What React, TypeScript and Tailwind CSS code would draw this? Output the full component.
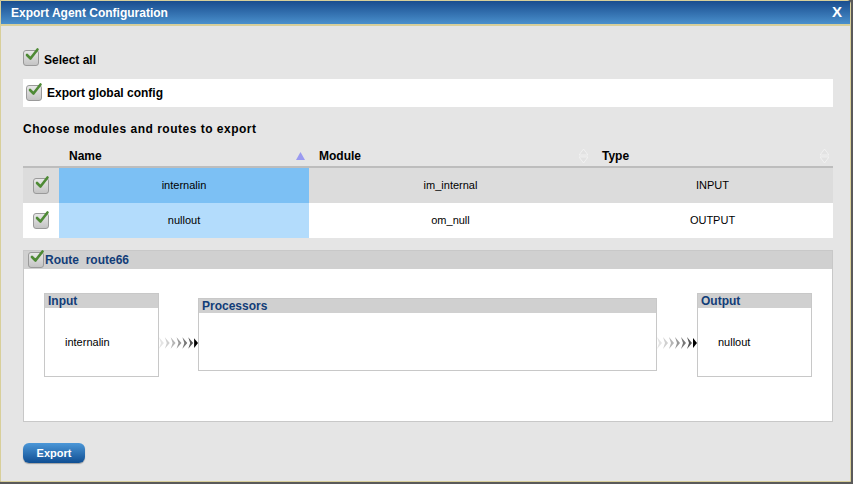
import React from "react";

const Check = ({ size = 16 }: { size?: number }) => (
  <span className="relative inline-block shrink-0" style={{ width: size, height: size }}>
    <span className="absolute inset-0 rounded-[3px] border border-[#9a9a9a] bg-gradient-to-b from-[#e8e8e8] to-[#c4c4c4]" />
    <svg viewBox="0 0 16 16" className="absolute left-[1px] -top-[3px]" width={size} height={size}>
      <path d="M3 8 L6.5 11.5 L13.5 2.5" fill="none" stroke="#4e8a35" strokeWidth="2.6" strokeLinecap="round" strokeLinejoin="round" />
    </svg>
  </span>
);

const SortArrows = ({ active }: { active?: boolean }) =>
  active ? (
    <svg width="9" height="8" viewBox="0 0 9 8"><path d="M4.5 0 L9 8 L0 8Z" fill="#9a9af0" /></svg>
  ) : (
    <svg width="9" height="14" viewBox="0 0 9 14"><path d="M4.5 0 L9 6 L0 6Z M4.5 14 L9 8 L0 8Z" fill="#e2e2e2" stroke="#f4f4f4" strokeWidth="0.8" /></svg>
  );

const Chevrons = () => (
  <svg width="40" height="16" viewBox="0 0 40 16">
    {[0, 1, 2, 3, 4, 5].map((i) => (
      <path key={i} d={`M${i * 6} 2 L${i * 6 + 5} 8 L${i * 6} 14 L${i * 6 + 2} 8Z`} fill={["#e4e4e4", "#d0d0d0", "#b5b5b5", "#999", "#777", "#555"][i]} />
    ))}
    <path d="M36 3 L40 8 L36 13Z" fill="#000" />
  </svg>
);

const Box = ({ title, children, cls }: { title: string; children?: React.ReactNode; cls: string }) => (
  <div className={`flex flex-col border border-[#c8c8c8] bg-white ${cls}`}>
    <div className="h-[14px] bg-[#d0d0d0] pl-[3px] text-[12px] font-bold leading-[14px] text-[#123d78]">{title}</div>
    <div className="flex flex-1 items-center text-[11px]">{children}</div>
  </div>
);

export default function App() {
  return (
    <div className="h-[484px] w-[853px] overflow-hidden bg-[#5a5a5a] font-[Liberation_Sans,Arial,sans-serif]">
      <div className="flex h-[482px] w-[851px] flex-col rounded-tr-[4px] border border-[#d8cf9a] bg-[#e5e5e5]">
        <div className="flex h-[25px] items-center justify-between border-b-2 border-[#d8cf9a] bg-gradient-to-b from-[#1a4d8f] to-[#4a90cc] pl-[10px] pr-[8px] text-white">
          <span className="text-[12px] font-bold">Export Agent Configuration</span>
          <span className="text-[15px] font-bold">X</span>
        </div>
        <div className="flex flex-col px-[22px]">
          <div className="mt-[22px] flex h-[20px] items-center gap-[5px]">
            <Check />
            <span className="mt-[4px] text-[12px] font-bold text-black">Select all</span>
          </div>
          <div className="mt-[11px] flex h-[28px] w-[810px] items-center gap-[5px] bg-white pl-[3px]">
            <Check />
            <span className="text-[12px] font-bold">Export global config</span>
          </div>
          <div className="mt-[13px] text-[12px] font-bold tracking-[0.5px]">Choose modules and routes to export</div>
          <div className="mt-[8px] w-[810px] text-[11px]">
            <div className="flex h-[22px] items-center border-b-2 border-[#bdbdbd] text-[12px] font-bold">
              <div className="w-[36px]" />
              <div className="flex w-[250px] items-center justify-between pl-[10px] pr-[4px]">Name<SortArrows active /></div>
              <div className="flex w-[283px] items-center justify-between pl-[10px] pr-[4px]">Module<SortArrows /></div>
              <div className="flex flex-1 items-center justify-between pl-[10px] pr-[4px]">Type<SortArrows /></div>
            </div>
            <div className="flex h-[35px] items-center bg-[#dcdcdc]">
              <div className="flex w-[36px] justify-center"><Check /></div>
              <div className="flex h-full w-[250px] items-center justify-center bg-[#7cc0f4]">internalin</div>
              <div className="w-[283px] text-center">im_internal</div>
              <div className="flex-1 text-center">INPUT</div>
            </div>
            <div className="flex h-[35px] items-center bg-white">
              <div className="flex w-[36px] justify-center"><Check /></div>
              <div className="flex h-full w-[250px] items-center justify-center bg-[#b3dcfc]">nullout</div>
              <div className="w-[283px] text-center">om_null</div>
              <div className="flex-1 text-center">OUTPUT</div>
            </div>
          </div>
          <div className="mt-[12px] flex h-[172px] w-[810px] flex-col border border-[#c8c8c8] bg-white">
            <div className="flex h-[18px] items-center gap-[1px] bg-[#d0d0d0] pl-[4px] text-[12px] font-bold text-[#123d78]">
              <Check />
              <span>Route&nbsp; route66</span>
            </div>
            <div className="flex items-start pl-[20px] pt-[24px]">
              <Box title="Input" cls="w-[115px] h-[84px]"><span className="pl-[20px]">internalin</span></Box>
              <div className="mt-[42px] flex w-[39px] justify-end"><Chevrons /></div>
              <Box title="Processors" cls="mt-[5px] w-[459px] h-[73px]" />
              <div className="mt-[42px] flex w-[40px] justify-end"><Chevrons /></div>
              <Box title="Output" cls="w-[115px] h-[84px]"><span className="pl-[20px]">nullout</span></Box>
            </div>
          </div>
          <button className="mt-[21px] flex h-[20px] w-[62px] items-center justify-center rounded-[6px] bg-gradient-to-b from-[#4b97d8] to-[#0f4f93] text-[11px] font-bold text-white shadow-[0_1px_1px_rgba(0,0,0,0.3)]">
            Export
          </button>
        </div>
      </div>
    </div>
  );
}
